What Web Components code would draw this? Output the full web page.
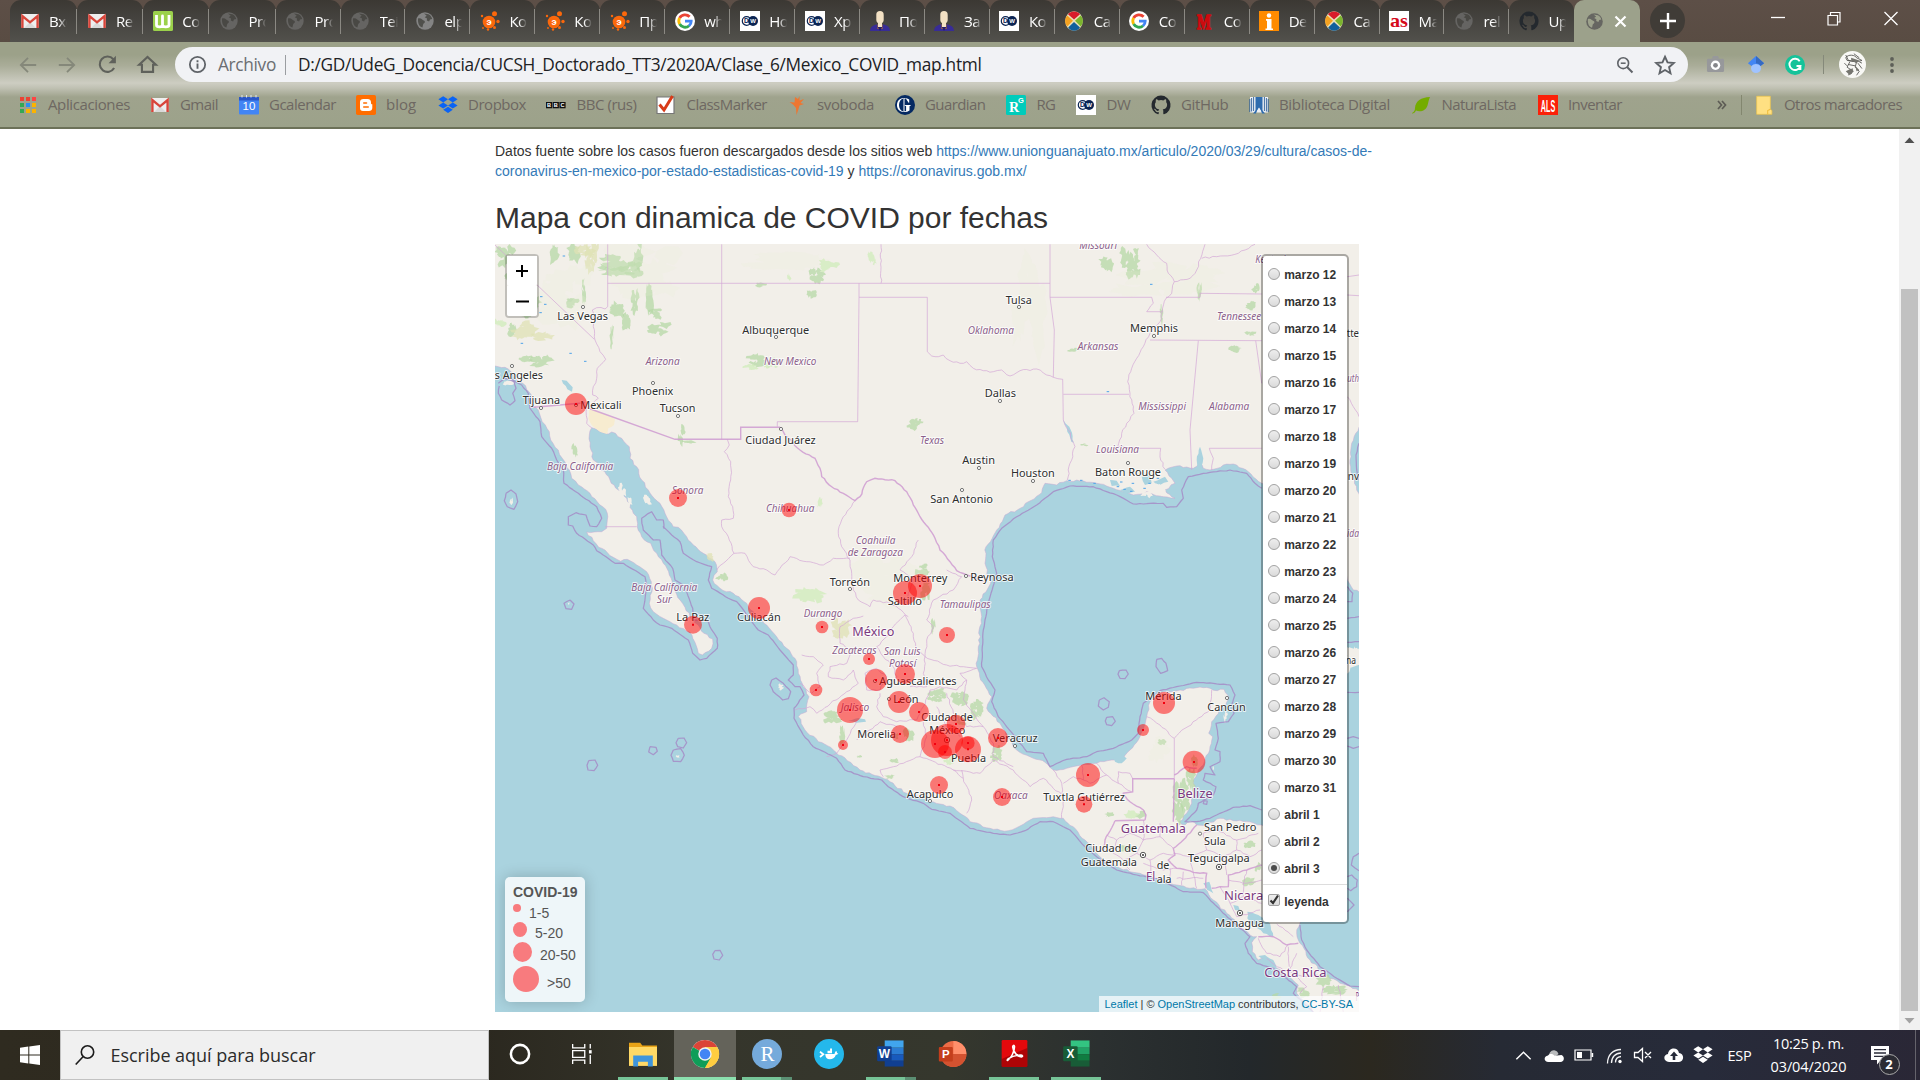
<!DOCTYPE html>
<html lang="es">
<head>
<meta charset="utf-8">
<title>Mexico_COVID_map.html</title>
<style>
html,body{margin:0;height:100%;background:#fff;overflow:hidden}
</style>
</head>
<body>
<desktop-screen></desktop-screen>
<script>
const UI = '"Open Sans","Noto Sans",sans-serif';
const define = (name, html, after) => customElements.define(name, class extends HTMLElement {
  connectedCallback() {
    if (this.shadowRoot) return;
    const root = this.attachShadow({ mode: 'open' });
    root.innerHTML = typeof html === 'function' ? html(this) : html;
    if (after) after(this, root);
  }
});

/* Text run that is tracked to an exact advance width */
define('fit-text', '<style>:host{display:inline-block;white-space:nowrap}span{display:inline-block}</style><span><slot></slot></span>', (el, root) => {
  const want = parseFloat(el.getAttribute('w'));
  if (!want) return;
  const s = root.querySelector('span'), n = el.textContent.length;
  s.style.letterSpacing = ((want - s.getBoundingClientRect().width) / n).toFixed(3) + 'px';
});

const T = (x, y, size, fill, str, extra = '') => `<text x="${x}" y="${y}" font-size="${size}" fill="${fill}" text-anchor="middle" ${extra}>${str}</text>`;
const dropbox = c => `<path fill="${c}" d="M5.2 1.2 10 4.3 5.2 7.4.4 4.3zM14.8 1.2l4.8 3.1-4.8 3.1L10 4.3zM.4 10.5l4.8-3.1 4.8 3.1-4.8 3.1zM14.8 7.4l4.8 3.1-4.8 3.1-4.8-3.1zM5.2 14.8 10 11.7l4.8 3.1-4.8 3.1z"/>`;
const globe = (a, b) => `<circle cx="10" cy="10" r="8.7" fill="${a}"/><path fill="${b}" d="M3 7.500c1.500-.6 3-.2 4.200.9 1.200 1.200 2.600.6 2.700 2.300.1 1.500-1.900 1.500-1.900 3.200l-.6 2.600C4.500 15.500 2.700 13 3 7.500zM9 2.500l4.500.8c2 1 3.200 2.600 3.700 4.700l-2.200.4-.9 2-2.300-.8.2-2L9.700 6.300l2-1.600z"/>`;
const dw = `<path fill="#fff" d="M0 0h20v20H0z"/><circle cx="6.600" cy="10" r="4.300" fill="none" stroke="#0b2453" stroke-width="1.200"/><circle cx="13" cy="10" r="5" fill="#0b2453"/>${T(6.4, 12.4, 6.5, '#0b2453', 'D', 'font-weight="700"')}${T(13.2, 12.2, 6, '#fff', 'W', 'font-weight="700"')}`;
const gh = c => `<path fill="${c}" d="M10 .6a9.600 9.600 0 0 0-3 18.700c.5.1.7-.2.700-.5v-1.700c-2.700.6-3.300-1.300-3.300-1.300-.4-1.100-1.100-1.400-1.100-1.400-.9-.6.1-.6.1-.6 1 .1 1.500 1 1.500 1 .9 1.500 2.300 1.100 2.800.8.100-.6.300-1.100.6-1.300-2.100-.2-4.400-1.100-4.400-4.800 0-1 .4-1.900 1-2.600-.1-.2-.4-1.200.1-2.500 0 0 .8-.3 2.600 1a9.200 9.200 0 0 1 4.800 0c1.800-1.300 2.600-1 2.600-1 .5 1.300.2 2.300.1 2.500.6.700 1 1.600 1 2.600 0 3.700-2.300 4.600-4.400 4.800.3.300.6.900.6 1.800v2.700c0 .3.200.6.700.5A9.600 9.600 0 0 0 10 .6z"/>`;
const winapp = (a, b, c, d, ch) => `<path fill="${a}" d="M6 1h13v5H6z"/><path fill="${b}" d="M6 6h13v4.500H6z"/><path fill="${c}" d="M6 10.500h13V15H6z"/><path fill="${d}" d="M6 15h13v4H6z"/><rect x=".8" y="5" width="10" height="10.400" rx=".8" fill="${d}"/>${T(5.8, 13, 8.2, '#fff', ch, 'font-weight="700"')}`;

const ICONS = {
  gmail: '<rect x="1.200" y="3" width="17.600" height="14" rx="1.200" fill="#eee"/><path fill="#d9d9d9" d="M4 17l6-6 6 6z"/><path fill="none" stroke="#d8453a" stroke-width="2.400" d="M2.400 17V5l7.600 6.300L17.600 5v12"/>',
  webtoon: '<rect width="20" height="20" rx="1.500" fill="#9bd14b"/><path fill="none" stroke="#fff" stroke-width="2.800" stroke-linejoin="round" d="M3.500 4v10c0 2.500 6 2.500 6 0V5v9c0 2.500 6.500 2.500 6.500 0V4"/>',
  globe: globe('#656462', '#494844'),
  globelit: globe('#848484', '#50504c'),
  globetab: globe('#666661', '#9da28c'),
  ekho: '<circle cx="9" cy="11" r="6.300" fill="#fb680c"/><circle cx="14.500" cy="2.800" r="2.500" fill="#fb680c"/><circle cx="18" cy="10.500" r="1.700" fill="#fb680c"/><circle cx="2" cy="5" r="1.200" fill="#fb680c"/><circle cx="14.500" cy="16.500" r="1.500" fill="#fb680c"/><circle cx="8" cy="18.500" r="1.200" fill="#fb680c"/><circle cx="3" cy="17" r=".9" fill="#fb680c"/>' + T(9, 14.4, 9.5, '#fff', 'э', 'font-weight="700"'),
  google: '<circle cx="10" cy="10" r="10" fill="#fff"/><path fill="none" stroke="#ea4335" stroke-width="2.800" d="M4.600 7A6.200 6.200 0 0 1 14.600 5.800"/><path fill="none" stroke="#fbbc05" stroke-width="2.800" d="M4.600 7a6.200 6.200 0 0 0 0 6"/><path fill="none" stroke="#34a853" stroke-width="2.800" d="M4.600 13a6.200 6.200 0 0 0 9.500 1.700"/><path fill="none" stroke="#4285f4" stroke-width="2.800" d="M14 14.800c1.500-1.200 2.200-2.500 2.200-4.600H10"/>',
  dw,
  person: '<path fill="#382c96" d="M0 20c.3-3.500 1.500-5 6-6.500h8c4.500 1.500 5.700 3 6 6.500z"/><path fill="#b8742f" d="M7.500 13.500h5V18h-5z"/><path fill="#261d6d" d="M7.500 15.500 10 20l2.500-4.500z"/><path fill="#f3e1c4" d="M8 11h4v5H8z"/><rect x="6.300" y="0" width="7.400" height="12.500" rx="3.700" fill="#f3e1c4"/>',
  drop: '<ellipse cx="10" cy="10" rx="8.800" ry="9.800" fill="#e9e0b9"/><path fill="#d81c2b" d="M10 8.500 4 3.200C7-.5 13-.5 16 3.200z"/><path fill="#105f9d" d="m10 11-5.800 5.500c3 4.300 8.800 4.300 11.800 0z"/><path fill="#f4a221" d="M9 9.800 3.300 4.500c-3 3.500-2.800 7.500 0 11z"/><path fill="#7bb52e" d="m11 9.800 5.700-5.300c3 3.500 2.800 7.500 0 11z"/>',
  medusa: T(10, 17.5, 20, '#ce0a0e', 'M', 'font-weight="900" font-family="Liberation Serif" textLength="14" lengthAdjust="spacingAndGlyphs" stroke="#ce0a0e" stroke-width="1.400"'),
  info: '<path fill="#ff8b00" d="M0 0h20v20H0z"/><circle cx="10" cy="4.500" r="2.200" fill="#fff"/><path fill="#fff" d="M7 8h5.500v9.500H14V19H6.500v-1.500H8V9.800H7z"/>',
  as: '<path fill="#fff" d="M0 0h20v20H0z"/>' + T(10, 15.5, 19, '#d5091b', 'as', 'font-weight="700" font-family="Liberation Serif" textLength="18" lengthAdjust="spacingAndGlyphs"'),
  github: gh('#24292e'),
  apps: [['#ea4335', '#ea4335', '#f44'], ['#34a853', '#2d8ff0', '#fbb300'], ['#34a853', '#fbb300', '#fbb300']].map((r, j) => r.map((c, i) => `<path fill="${c}" d="M${2 + i * 6} ${2 + j * 6}h4v4h-4z"/>`).join('')).join(''),
  calendar: '<path fill="#4285f4" d="M0 2h20v16.500a1 1 0 0 1-1 1H1a1 1 0 0 1-1-1z"/><path fill="#2a56c6" d="M0 2h20v3.500H0z"/><path stroke="#dfe6f4" stroke-width="1" d="M3 0v2.500M7.500 0v2.500M12 0v2.500M17 0v2.500"/>' + T(10, 15.3, 11.5, '#fff', '10'),
  blogger: '<rect width="20" height="20" rx="1.800" fill="#ff6d00"/><path fill="#fff" fill-rule="evenodd" d="M7.500 4h4c2.500 0 3.500 1.600 3.500 3.400 0 1.500.3 1.700 1.300 1.900v3.700c0 2-1.500 3-3.300 3H7c-2 0-3-1.200-3-3V7c0-1.800 1.300-3 3.500-3zm.3 3.200c-1.100 0-1.100 1.600 0 1.600h2.700c1.100 0 1.100-1.600 0-1.600zm0 4c-1.100 0-1.100 1.600 0 1.600h4.400c1.100 0 1.100-1.600 0-1.600z"/>',
  dropbox: dropbox('#0a63f5'),
  bbc: [0, 6.7, 13.4].map(x => `<path fill="#111" d="M${x} 7h6.200v6.300H${x}z"/>` + T(x + 3.1, 12.2, 5.6, '#fff', x > 13 ? 'C' : 'B', 'font-weight="700"')).join(''),
  classmarker: '<path fill="#fff" stroke="#777" stroke-width="1.200" d="M1 2h17v16.500H1z"/><path fill="none" stroke="#d83b18" stroke-width="3" d="M3.500 9.500 8 15l8.500-14"/>',
  svoboda: '<path fill="#ee7631" d="m8 2 3 2 1.500-3v4.500L17 4l-3.500 4 3.500 1-4.500 1.500L11.500 14 9.500 20 9 13 6 9.500 2.500 7l5 .5z"/>',
  guardian: '<circle cx="10" cy="10" r="10" fill="#052962"/><path fill="#fff" d="M8.500 3.500c-6 .8-6 12.200 0 13V17C-.2 16.500-.2 3.500 8.500 3z"/><path fill="#fff" d="M9.500 3c2 .1 3.500.6 4.700 1.500v3.300h-.6L11 3.700l-1.500-.2zM9.500 17V3h-1v14zM9.800 10h6v.6l-1.300.6v4.200A9 9 0 0 1 9.500 17v-.6l1.600-.6v-4.600L9.800 10.600z"/>',
  rg: '<rect width="20" height="20" rx="1.500" fill="#00ccbb"/>' + T(8, 17, 14, '#fff', 'R', 'font-family="Liberation Serif" font-weight="700"') + T(15, 7.6, 7.5, '#fff', 'G', 'font-weight="700"'),
  biblio: '<path fill="#eef1f6" d="M1 2h18v15.500H1z"/><path fill="#2f6cae" d="M6.500 2h7v15.500L10 12.500l-3.500 5z"/><path fill="#2f6cae" d="m11 12.500 5 6h-3zM9 12.500l-5 6h3z"/><path fill="none" stroke="#2b5d98" stroke-width=".9" d="M.8 4v13M2.600 3v13.500M4.600 2v14M15.400 2v14M17.400 3v13.500M19.200 4v13"/>',
  leaf: '<path fill="#74ac00" d="M1 18c2-1 3-2.500 3-5C4.500 6 10 2.500 19 2c-1.500 3-1.500 5.500-2.500 8.500C15 15.500 9.500 17.500 5 15.500c-1 2-2 3-4 3z"/>',
  als: '<path fill="#fb2109" d="M0 0h20v20H0z"/>' + T(10, 7.3, 7.2, '#fff', 'ALS', 'font-weight="700" transform="scale(1 2.280)"'),
  folder: '<path fill="#ffe082" stroke="#ecc44e" stroke-width=".7" d="M3.500 1.200h13v12.500l1.500 1v3.700H3.500z"/><path fill="none" stroke="#f0bd3c" stroke-width="1" d="M14 18.300v-3.500l2.500-1.300"/>',
  back: '<path fill="none" stroke="#85887a" stroke-width="1.800" d="M18.200 10H3.200M10 2.800 2.800 10l7.200 7.200"/>',
  forward: '<path fill="none" stroke="#85887a" stroke-width="1.800" d="M1.800 10h15M10 2.800l7.200 7.200-7.200 7.200"/>',
  reload: '<path fill="none" stroke="#5f615b" stroke-width="2" d="M16.300 13.300A7.300 7.300 0 1 1 15.500 5"/><path fill="#5f615b" d="M18 1.700v7h-7z"/>',
  home: '<path fill="none" stroke="#5f615b" stroke-width="2" d="m2 10.200 8-7.400 8 7.400h-2.700V17H4.700v-6.800z"/>',
  about: '<circle cx="10" cy="10" r="7.300" fill="none" stroke="#5f6368" stroke-width="1.700"/><path stroke="#5f6368" stroke-width="1.800" d="M10 9v5M10 6v1.800"/>',
  zoom: '<circle cx="8" cy="8" r="6" fill="none" stroke="#5f6368" stroke-width="1.800"/><path stroke="#5f6368" stroke-width="1.700" d="M5.300 8h5.400"/><path stroke="#5f6368" stroke-width="2.200" d="m12.300 12.300 6 6"/>',
  star: '<path fill="none" stroke="#5f6368" stroke-width="1.700" d="m10 2.500 2.300 5.200 5.700.5-4.300 3.800 1.300 5.600-5-3-5 3 1.300-5.600L2 8.200l5.700-.5z"/>',
  camera: '<rect x="1" y="4" width="18" height="14" rx="1.500" fill="#97989b"/><path fill="#97989b" d="m6 4 1.500-3h5L14 4z"/><circle cx="10" cy="10.800" r="5" fill="#fff"/><circle cx="10" cy="10.800" r="2.500" fill="#85868a"/>',
  scholar: '<circle cx="10" cy="13.500" r="5.500" fill="#a0c3ff"/><path fill="#4285f4" d="M10 0 1 8l4 3c2-3 8-3 10 0l4-3z"/><path fill="#356ac3" d="m10 0 9 8-4 3c-1-2-3-3-5-3z"/>',
  grammarly: '<circle cx="10" cy="10" r="10" fill="#15c39a"/><path fill="none" stroke="#fff" stroke-width="1.900" d="M14.700 6.300A5.600 5.600 0 1 0 15.400 11H11.500M15.400 10.500V15"/>',
  avatar: '<circle cx="10" cy="10" r="10" fill="#f8f8f5"/><path fill="none" stroke="#4a4a47" stroke-width=".6" d="M5 5c2-3 7-2 8 0l4 2-4 1-7-1zM5 3l2 4 6 1M13 8l-1 4 3 3-2 3M8 8l-2 4 3 2-2 4M14 9l3 4M4 9l2 2M10 13l-1 4M11 2l4 3M7 10l5 1M15 8l2 1"/><path fill="#75756f" d="m9 5 6 2-2 2-4-2zM5 15l4-2 2 2-3 3zM12 11l3 3-2 1z"/>',
  dots: '<g fill="#5d5f58"><circle cx="10" cy="4" r="1.900"/><circle cx="10" cy="10" r="1.900"/><circle cx="10" cy="16" r="1.900"/></g>',
  winstart: '<path fill="#fff" d="m0 2.800 8.300-1.200v7.900H0zM9.300 1.500 20 0v9.500H9.300zM0 10.500h8.300v7.900L0 17.200zM9.300 10.500H20V20L9.300 18.500z"/>',
  lens: '<circle cx="12.500" cy="7" r="6.200" fill="none" stroke="#1b1b1b" stroke-width="1.600"/><path stroke="#1b1b1b" stroke-width="1.600" d="m8.200 11.500-7.500 8"/>',
  cortana: '<circle cx="10" cy="10" r="8.300" fill="none" stroke="#fff" stroke-width="2.300"/>',
  taskview: '<path fill="none" stroke="#fff" stroke-width="1.200" d="M1.500 1v3.500h11V1M1.500 19v-3.500h11V19M1.500 7h11v6h-11zM17.500 1v4M17.500 11v8"/><path fill="#fff" d="M16.300 6.500h2.500V9.500h-2.500z"/>',
  explorer: '<path fill="#e8a317" d="M0 2h8l1.500 2H20v14H0z"/><path fill="#ffd966" d="M0 5h20v13.500H0z"/><path fill="#3f95dc" d="M3 19v-8h14v8h-3.500v-3.500h-7V19z"/>',
  chrome: '<circle cx="10" cy="10" r="10" fill="#fff"/><path fill="#db4437" d="M10 10 1.300 5A10 10 0 0 1 18.700 5z"/><path fill="#0f9d58" d="M10 10v10A10 10 0 0 1 1.300 5z"/><path fill="#ffcd40" d="M10 10V5h8.700A10 10 0 0 1 10 20z"/><path fill="#0f9d58" d="m10 20 4.300-7.500H6z"/><path fill="#ffcd40" d="m10 20 4.300-7.500V10L19 5.500A10 10 0 0 1 10 20z"/><circle cx="10" cy="10" r="4.800" fill="#f1f1f1"/><circle cx="10" cy="10" r="3.800" fill="#4285f4"/>',
  rstudio: '<circle cx="10" cy="10" r="10" fill="#75aadb"/>' + T(10.3, 14.7, 14, '#fff', 'R', 'font-family="Liberation Serif"'),
  ship: '<circle cx="10" cy="10" r="10" fill="#24b8eb"/><path fill="none" stroke="#fff" stroke-width="1.200" d="m4 8.500 2.200 1.700L4 12"/><path fill="#fff" d="M7.500 10h6.200c.2-1 .4-1.600 1.100-2 .5.500.6 1 .5 1.500h.9c-.4.900-.9 1-1.600 1-.8 2.300-2.300 3-4 3-1.900 0-3.100-1.200-3.100-3.500zM9 7.800h3v1.700H9zM10.700 6.400h1.300v1.400h-1.300z"/>',
  word: winapp('#41a5ee', '#2b7cd3', '#185abd', '#103f91', 'W'),
  ppt: '<circle cx="11" cy="10" r="9.300" fill="#ed6c47"/><path fill="#ff8f6b" d="M11 .7a9.300 9.300 0 0 1 9.300 9.300H11z"/><path fill="#d35230" d="M1.700 10h18.600a9.300 9.300 0 0 1-18.600 0z"/><rect x=".6" y="5" width="10" height="10.400" rx=".8" fill="#c43e1c"/>' + T(5.6, 13, 8.2, '#fff', 'P', 'font-weight="700"'),
  acrobat: '<rect x=".5" y="0" width="19" height="20" rx="1" fill="#e4090c"/><path fill="#700" opacity=".5" d="m.5 14 19-8v14H.5z"/><path fill="none" stroke="#fff" stroke-width="1.200" d="M5 15c2.500-1.500 5-6.500 5-10 0-1.500-1.500-1.200-1.300.3C9 8.500 12 12.500 15 12.500c1.500-.2 1-1.300-.5-1.300-3 0-6.500 1-9 2.600-1.200.8-1 1.600-.5 1.200z"/>',
  excel: winapp('#33c481', '#21a366', '#107c41', '#185c37', 'X'),
  caret: '<path fill="none" stroke="#fff" stroke-width="1.500" d="M2.500 14 10 6.500 17.500 14"/>',
  cloud: '<path fill="#b9bbbd" d="M5 12c-.5-4 2.500-7.500 6-6.500 2 .4 3 2 3.500 3.500L8 14z"/><path fill="#fff" d="M4.500 17C-.5 17-.5 11 4 10.500c2-2.300 5-1.800 6.500.3L17.500 10c3.500 1.500 3 7-1 7z"/>',
  battery: '<path fill="none" stroke="#fff" stroke-width="1.200" d="M1 5h16v10H1z"/><path fill="#fff" d="M3 7h5v6H3zM17.600 8h1.600v4h-1.600z"/>',
  wifi: '<circle cx="16" cy="16.500" r="1.700" fill="#fff"/><path fill="none" stroke="#fff" stroke-width="1.300" d="M11.500 17.500c0-3.500 2.300-5.700 5.500-6M7.500 18c0-6 4-10 9.500-10M3.500 18.500C3.500 10 9 4.500 17 4.500" opacity=".95"/>',
  mute: '<path fill="none" stroke="#fff" stroke-width="1.300" d="M1.500 7.500H5l4.500-4v13L5 12.500H1.500zM12 7l6 6M18 7l-6 6"/>',
  upload: '<path fill="#fff" fill-rule="evenodd" d="M5 17c-6-.5-6-7.500-1-8C5 2 14 2 15 8c5.500.5 5.500 8.500 0 9zM10 6.500 6 11h2.700v4h2.600v-4H14z"/>',
  dropwhite: dropbox('#fff'),
  notes: '<path fill="#fff" d="M1 1h18v14h-8l-4 4.500V15H1z"/><path stroke="#2a2b38" stroke-width="1.300" d="M4 4.700h12M4 8h12M4 11.300h12"/>'
};
define('app-icon', el => {
  const s = el.getAttribute('size') || 20;
  return `<style>:host{display:block;flex:none;width:${s}px;height:${s}px}svg{display:block;font-family:"Liberation Sans",sans-serif;overflow:visible}</style><svg width="${s}" height="${s}" viewBox="0 0 20 20">${ICONS[el.getAttribute('name')] || ''}</svg>`;
});
const icon = (n, s = 20, st = '') => `<app-icon name="${n}" size="${s}" style="${st}"></app-icon>`;

/* ---- browser chrome ---- */
const TABS = [['gmail', 'Вхо'], ['gmail', 'Re:'], ['webtoon', 'Cor'], ['globe', 'Pro'], ['globe', 'Pro'], ['globe', 'Tei'], ['globelit', 'elpa'], ['ekho', 'Ко'], ['ekho', 'Ко'], ['ekho', 'Пр'], ['google', 'wh'], ['dw', 'Но'], ['dw', 'Хр'], ['person', 'По'], ['person', 'За'], ['dw', 'Ко'], ['drop', 'Ca'], ['google', 'Co'], ['medusa', 'Co'], ['info', 'De'], ['drop', 'Ca'], ['as', 'Ma'], ['globe', 'rel'], ['github', 'Up']];
define('browser-tab', `<style>
:host{display:flex;align-items:center;box-sizing:border-box;height:42px;padding-left:9.500px;border-radius:11px 11px 0 0;background:linear-gradient(#3b3833,#45433f 45%,#52514c);flex:none}
.t{font:15px ${UI};color:#fff;margin-left:9.500px;width:18px;overflow:hidden;white-space:nowrap;letter-spacing:-.5px;-webkit-mask-image:linear-gradient(90deg,#000 55%,transparent)}
i{width:1px;height:25px;background:#8b8983;margin-left:auto}
:host([last]) i{visibility:hidden}
</style><slot name="icon"></slot><div class="t"><slot></slot></div><i></i>`);
define('tab-strip', `<style>
:host{display:flex;height:42px;background:linear-gradient(#5d4f47,#594c43);padding-left:10px;overflow:hidden}
.active{width:66px;height:42px;background:#9ca18b;border-radius:10px 10px 0 0;display:flex;align-items:center;box-sizing:border-box;padding-left:11px;gap:10px;flex:none}
.plus{width:35px;height:35px;border-radius:50%;background:#403c37;margin:3px 0 0 10px;display:grid;place-items:center}
.win{display:flex;margin:8px 22px 0 auto;gap:42.700px}
svg{display:block}
</style>
${TABS.map(([n, t], i) => `<browser-tab ${i === 23 ? 'last' : ''} style="width:${i === 0 ? 67 : i < 4 ? 66.2 : 64.95}px">${icon(n, 20).replace('<app-icon', '<app-icon slot="icon"')}${t}</browser-tab>`).join('')}
<div class="active">${icon('globetab', 19)}<svg width="13" height="13"><path d="M1.500 1.500l10 10M11.500 1.500l-10 10" stroke="#fff" stroke-width="2.200"/></svg></div>
<div class="plus"><svg width="16" height="16"><path d="M8 0v16M0 8h16" stroke="#fff" stroke-width="2.400"/></svg></div>
<div class="win"><svg width="14" height="20"><path d="M0 9.500h14" stroke="#fff" stroke-width="1.300"/></svg><svg width="14" height="20"><path d="M1 7.500h9.500V17H1zM3.500 7V4.500H13V14h-2.500" fill="none" stroke="#fff" stroke-width="1.200"/></svg><svg width="14" height="20"><path d="M.5 4l13 13M13.500 4l-13 13" stroke="#fff" stroke-width="1.300"/></svg></div>`);
define('omni-bar', `<style>
:host{display:flex;align-items:center;height:35px;padding:5px 18px 2px 18px;font:17.300px ${UI}}
.box{display:flex;align-items:center;height:35px;border-radius:18px;background:#f1f2f5;width:1515px;box-sizing:border-box;margin-left:17px;padding:0 12px 0 12px;color:#202124}
.p{color:#6b6e72;margin-left:10px}.bar{width:1px;height:20px;background:#9a9da1;margin:0 12px 0 9px}
.sep{width:1px;height:19px;background:#85897a;margin:0 15px 0 18px}
</style>
${icon('back', 20)}${icon('forward', 20, 'margin-left:19px')}${icon('reload', 21, 'margin-left:20px')}${icon('home', 21, 'margin-left:19px')}
<div class="box">${icon('about', 21)}<fit-text class="p" w="58">Archivo</fit-text><span class="bar"></span><fit-text w="683.500">D:/GD/UdeG_Docencia/CUCSH_Doctorado_TT3/2020A/Clase_6/Mexico_COVID_map.html</fit-text>${icon('zoom', 18, 'margin-left:auto')}${icon('star', 22, 'margin-left:20px')}</div>
${icon('camera', 19, 'margin-left:18px')}${icon('scholar', 18, 'margin-left:22px')}${icon('grammarly', 20, 'margin-left:20px')}<span class="sep"></span>${icon('avatar', 27)}${icon('dots', 20, 'margin-left:16px')}`);
/* icon, label, label width, x of the icon's left edge */
const MARKS = [['apps', 'Aplicaciones', 82, 18], ['gmail', 'Gmail', 38, 150], ['calendar', 'Gcalendar', 67, 239], ['blogger', 'blog', 30, 356], ['dropbox', 'Dropbox', 58, 438], ['bbc', 'BBC (rus)', 60, 546.500], ['classmarker', 'ClassMarker', 80.5, 656.500], ['svoboda', 'svoboda', 57, 787], ['guardian', 'Guardian', 60.5, 895], ['rg', 'RG', 18.5, 1006.500], ['dw', 'DW', 24, 1076.500], ['github', 'GitHub', 47.5, 1151], ['biblio', 'Biblioteca Digital', 111, 1249], ['leaf', 'NaturaLista', 74.500, 1411.500], ['als', 'Inventar', 54, 1538]];
define('bookmark-bar', `<style>
:host{display:flex;align-items:center;height:42px;padding:0 18px;font:15px ${UI};color:#6e6862}
div{display:flex;align-items:center;gap:10px;flex:none}fit-text{margin-top:-2px}
.more{margin-left:auto;gap:17px}.line{width:1px;height:20px;background:#83876f}
</style>${MARKS.map((m, i) => `<div style="margin-left:${i ? (m[3] - MARKS[i - 1][3] - 30 - MARKS[i - 1][2]).toFixed(1) : 0}px">${icon(m[0])}<fit-text w="${m[2]}">${m[1]}</fit-text></div>`).join('')}
<div class="more"><svg width="10" height="10"><path d="M1 1l3.500 4L1 9M5 1l3.500 4L5 9" fill="none" stroke="#5d5c55" stroke-width="1.700"/></svg><span class="line" style="margin-left:-3px"></span><div style="margin-left:-6px">${icon('folder', 21)}<fit-text w="118">Otros marcadores</fit-text></div></div>`);
define('browser-head', `<style>
:host{display:block;height:129px;box-sizing:border-box;border-bottom:2px solid #6c7158;background:linear-gradient(#9ca189 42px,#9ca189 55px,#aaad99 66px,#cdcdc2 83px,#c0c1b3 88px,#9fa38d 97px,#9ca28a 127px)}
</style><tab-strip></tab-strip><omni-bar></omni-bar><bookmark-bar></bookmark-bar>`);

/* ---- map geometry: each sheet has its own origin, three units to a pixel ---- */
const SHEET = { A: [490, 130], B: [930, 130], C: [490, 520], D: [930, 520], E: [780, 540] };
let seed = 7;
const rnd = () => (seed = (seed * 16807) % 2147483647) / 2147483647;
const pts = str => {
  const out = []; let o = SHEET.A, pend = null;
  for (const t of str.trim().split(/\s+/)) {
    if (SHEET[t]) { o = SHEET[t]; continue; }
    if (pend === null) pend = +t; else { out.push([o[0] + pend / 3, o[1] + t / 3]); pend = null; }
  }
  return out;
};
const rough = (p, amp) => {
  const out = [p[0]];
  for (let i = 1; i < p.length; i++) {
    const [a, b] = p[i - 1], [c, d] = p[i], L = Math.hypot(c - a, d - b), n = Math.min(12, Math.floor(L / 3.2));
    for (let k = 1; k < n; k++) { const j = (rnd() - .5) * 2 * amp; out.push([a + (c - a) * k / n - (d - b) / L * j, b + (d - b) * k / n + (c - a) / L * j]); }
    out.push([c, d]);
  }
  return out;
};
const toD = p => 'M' + p.map(q => q[0].toFixed(1) + ' ' + q[1].toFixed(1)).join('L');
const line = (str, amp = .8) => str.split('|').map(s => toD(amp ? rough(pts(s), amp) : pts(s))).join('');

const LAND = line(`A 0 325 0 706 15 708 45 712 62 724 78 748 98 760 124 795 128 830 145 840 152 862 166 885 178 905 182 930 205 960 217 985 238 1020 245 1045 265 1065 300 1090 338 1130 352 1150
C 352 0 350 25 335 35 290 36 310 62 326 82 345 90 370 112 392 124 412 118 440 135 470 155 484 185 486 215 478 250 490 275 520 295 560 315 600 337 614 365 625 400 637 405 665 385 668 357 642 340 625 315 600 290 585 262 570 240 550 205 538 165 520 130 500 100 482 70 455 50 442 20
A 440 1160 430 1150 410 1105 385 1080 360 1050 330 1010 310 990 300 950 298 915 305 893 330 905 355 912 365 906 395 925 418 950 420 985 440 1010 455 1050 475 1080 510 1120 525 1150 550 1190
C 565 22 590 50 610 75 640 100 675 125 682 155 668 180 690 205 730 220 770 250 800 290 830 315 860 350 890 385 920 425 925 460 940 500 957 530 950 575 925 590 945 630 985 665 1030 690 1072 722 1110 750 1165 768 1200 785 1250 820 1320 845 1380 858
D 90 880 120 905 180 925 235 932 270 918 310 895 370 890 400 895 430 920 465 960 500 1000 530 1025 570 1045 630 1060 680 1075 720 1090 780 1105 825 1106 850 1140 890 1180 925 1215 960 1245 980 1250 965 1268 967 1295 985 1320 1010 1315 1040 1345 1080 1372 1105 1395 1100 1420 1130 1450 1160 1490 1305 1490 1305 1418 1287 1412 1230 1390 1180 1362 1140 1320 1110 1270 1100 1240 1110 1210 1130 1100 1130 940 995 915 960 905 900 898 860 897 830 915 800 915 782 903 765 915 748 905 770 880 785 850 795 810 790 780 805 750 820 735 840 680 848 650 836 640 845 605 868 570 885 560 897 535 882 508 862 512 840 505 800 503 750 510 700 515 660 545 650 590 640 630 625 660 600 690 580 715 545 720 500 730 455 735 410 745 370 750 345 727 300 710 260 690 240 660 210 610 170 565 185 530 152 480 140 440 145 380 153 300 150 240 182 190 165 130 168 80 200 30
B 208 1192 225 1155 262 1140 295 1115 335 1088 345 1060 380 1065 410 1052 450 1053 500 1060 540 1072 590 1088 610 1095 650 1085 700 1100 735 1105 705 1080 735 1060 725 1045 705 1020 740 1008 790 1015 808 1000 820 1015 850 1018 880 1005 920 1005 955 1025 995 1060 1060 1110 1120 1090
D 1200 50 1252 180 1270 210 1300 222 B 1300 1120 1280 1080 1262 1010 1265 940 1287 892 1305 860 1305 325`, 1.1) + 'Z';

const SEA = line(`A 60 745 95 765 115 790 120 835 150 875 155 920 185 955 200 990 220 1020 222 1060 265 1090 320 1130 335 1165 320 1190 300 1188 288 1155 258 1148 235 1160 235 1185 C 248 18 260 40 310 75 320 92 375 130 400 130 465 170 470 200 460 265 490 300 510 315 545 325 595 360 608 400 630 420 650 415 682 385 682 355 660 320 655 305 610 300 608 265 585 200 555 180 548 145 515 105 510 60 490 60 460 30 455 0 A 455 1165 485 1145 500 1170 520 1170 522 1195 C 520 20 545 45 570 65 580 100 620 125 665 140 655 180 665 205 715 235 740 245 775 290 805 330 835 345 870 390 910 435 910 465 895 480 915 500 930 500 942 525 912 565 912 595 940 645 970 680 1040 715 1065 750 1120 770 1175 780 1195 800 1240 830 1300 850 1325 868 1380 880
D 120 925 190 940 240 945 285 932 330 905 370 905 420 930 455 970 500 1010 560 1050 620 1065 690 1078 760 1115 820 1118 880 1180 960 1250 945 1270 955 1300 980 1330 1030 1345 1100 1400 1090 1420 1150 1476
|D 1287 1400 1260 1398 1220 1375 1170 1340 1130 1290 1115 1260 1110 1215
|D 995 870 960 857 910 862 870 880 840 895 800 905 765 905 800 870 805 850 850 825 858 800 820 780 825 760 855 765 840 740 870 725 870 695 855 690 865 655 858 610 895 605 912 580 905 555 915 525 900 495 850 490 800 487 740 500 690 512 640 550 630 590 625 640 605 660 550 685 500 695 470 710 410 718 360 740 340 700 290 695 255 650 205 590 185 545 195 510 175 480 155 440 160 330 175 250 200 160 187 110 190 60 215 25 B 215 1195 260 1160 320 1125 370 1085 420 1068 490 1070 560 1095 610 1122 700 1120 710 1132 740 1130 760 1105 755 1080 775 1040 820 1030 900 1020 950 1030 975 1060 995 1075
|A 25 760 45 745 72 755 78 775 68 790 75 812 60 825 35 810 25 790 28 768
|C 240 240 222 250 228 266 245 268 252 252 240 240|C 845 480 858 474 880 490 902 515 895 536 878 540 850 515 840 495 845 480
|C 480 680 498 682 502 694 490 704 476 696 480 680|C 296 722 315 720 323 736 312 752 294 750 291 736 296 722|C 565 655 582 654 590 668 580 684 563 680 558 668 565 655|C 550 690 572 686 583 706 572 725 550 724 543 706 550 690|C 675 1292 690 1291 698 1306 688 1320 672 1317 668 1303 675 1292
|D 568 452 588 450 595 462 585 476 570 475 564 463 568 452|D 680 418 695 415 708 430 713 452 692 460 678 440 680 418|D 508 540 522 533 538 545 535 562 520 570 505 558 508 540|D 530 592 548 590 556 604 545 617 530 614 526 603 530 592
|A 48 1090 63 1080 78 1092 83 1115 72 1138 52 1130 43 1112 48 1090|D 822 842 832 843 830 853 820 851 822 842
|B 1287 940 1278 975 1280 1020 1287 1050|D 1252 200 1268 220 1266 245 1252 245|D 1252 295 1287 290|D 1252 367 1287 365|D 1252 517 1287 517|D 1252 655 1270 650 1287 655|D 1252 678 1270 685 1287 680|D 1287 1000 1270 1010 1264 1035 1287 1052|D 1252 1070 1265 1065 1282 1080 1280 1100 1262 1112 1252 1105|D 1252 1135 1272 1155 1252 1175`, .35);
const NATION = line(`A 118 832 150 830 285 818|A 290 833 310 840 555 928 752 928 752 892 870 892|D 733 776 608 776 608 816 578 820|D 733 776 730 905|D 645 900 555 902`, 0)
  + line(`A 870 892 885 915 930 960 975 985 990 1015 995 1040 1025 1070 1060 1090 1095 1112 1110 1100 1130 1055 1155 1045 1215 1052 1250 1085 1270 1125 1290 1160 1320 1200 C 1335 55 1350 90 1380 125 D 80 152 110 165 160 185
|D 578 820 600 845 640 870 648 885 645 900|D 555 902 525 960 520 990|D 800 915 760 960 730 985 735 1005 715 1020 740 1045 800 1058 830 1060 828 1105|D 845 1105 870 1100 895 1100 895 1065 950 1050 995 1035|D 985 1250 1030 1250 1070 1275 1105 1270|D 733 765 770 740 800 745`, .6);
const STATE = line(`A 353 343 353 530|A 353 460 1380 460|B 60 460 360 460|A 695 343 695 928|A 1107 460 1107 502 1312 502 1312 665|A 1107 502 1103 875 862 875 862 890|A 15 345 313 628|B 360 343 360 502 373 600 370 742|B 360 502 665 502|B 650 545 697 545|B 708 502 810 502 810 490 995 492|B 660 630 995 632|B 805 632 780 900 785 1020|B 977 632 995 760|B 400 793 597 793|B 398 748 400 870|B 630 955 692 955|B 838 955 995 955|C 345 20 440 20|B 1252 440 1287 435|B 1252 495 1287 497|D 733 776 733 655`, 0)
  + line(`A 353 530 345 537 320 533 307 540 312 560 310 590 315 630 330 665 347 688 322 715 320 745 310 770 308 795 325 805 290 833 290 880 305 893|A 1173 343 1173 460
|A 1312 665 1325 678 1345 680 1360 675 1380 692 B 90 700 110 695 130 715 160 722 190 725 215 720 240 738 270 722 320 717 350 735 370 742 398 748
|A 712 928 718 945 703 965 722 995 722 1050 715 1100 728 1130 730 1165 695 1170 C 695 20 715 50 732 100 700 130 680 150|C 732 100 765 100 790 140 830 150 855 165 870 145 900 110 950 125 1000 135 1030 115 1080 115
|A 1095 1112 1060 1160 1045 1200 C 1045 40 1055 80 1080 120 1085 160 1090 210 1105 240 1140 260 1150 240 1200 250 1225 265 1255 290
|B 665 502 670 520 650 545|B 650 343 680 375 710 400 715 430 733 455 725 490 708 505 697 545 690 575 660 610 640 650 620 685 605 715 593 755 600 790 612 850 590 880 575 910 563 950 630 955|B 692 955 690 980 705 1018|B 733 455 780 445 800 420 812 385 825 343|B 815 385 860 380 925 370 975 343|B 400 870 415 900 435 950 420 1000 412 1050|B 838 955 850 985 845 1020|B 1252 800 1270 830 1287 860
|E 415 0 395 50 360 90 400 115 385 160 380 190|E 500 90 545 110 520 150 460 180 440 240 460 260 440 300 435 350 500 375 590 385|E 435 350 430 400 440 440 390 440|E 250 228 220 235 180 260 180 310 215 330 200 370 150 380 145 410 190 420 220 390 235 430 200 455|E 375 225 340 260 320 290 290 320 310 350 340 380 350 410 330 440|E 65 345 100 350 130 375 110 400 120 440 95 460 60 430|E 255 400 290 385 320 410 300 450 260 450 255 400|E 300 460 290 500 310 530 350 545 410 540 430 500 450 450 480 440 530 450 560 420 540 400 590 385|E 230 540 200 600 170 640 140 650|E 230 600 300 545 350 560|E 430 545 440 590 420 650 370 670 300 690 310 710|E 420 650 520 690 550 715 575 780 560 820|E 520 690 600 700 640 660 700 690 750 740 790 715 845 765|E 500 460 520 520 560 560 610 560 640 610 640 650 700 680|E 470 500 500 560 540 590|E 560 420 550 480 580 520 610 560|E 45 510 90 500 110 520 200 455|E 375 225 400 280 410 330 435 350|E 550 715 545 690
|D 370 750 395 790 400 860 395 895|D 500 730 530 765 565 790 605 815|D 565 790 565 755 600 760 608 776|D 455 735 460 780 480 790 530 765|D 650 590 690 615 733 655 765 625 840 570 845 510|D 400 790 430 770 460 780
|D 530 945 560 960 600 940 640 960 690 950 730 985|D 560 960 550 1000 580 1020 620 1000 640 960|D 620 1000 660 1020 700 1000 735 1005|D 580 1020 600 1050|D 660 1020 665 1065|D 640 900 640 960|D 690 910 690 950|D 640 1030 700 1050 740 1045|D 720 1045 725 1090|D 760 1055 755 1095|D 790 1058 800 1105|D 740 1075 820 1075|D 730 1000 780 1010 830 990 880 1010 920 990 960 1010 995 990|D 780 1010 790 1058|D 830 990 820 940 860 930|D 880 1010 890 1065|D 860 930 920 960 920 990|D 920 960 985 940|D 870 1100 900 1150 940 1130 995 1150|D 895 1080 940 1090 950 1050|D 940 1130 940 1090 995 1080|D 900 1150 920 1190 990 1170|D 985 1255 1010 1300 1050 1310 1075 1275|D 1075 1280 1078 1340|D 1010 1315 1060 1350 1120 1370 1180 1365|D 1100 1300 1080 1345 1130 1400 1110 1420|D 1180 1400 1170 1476|D 1040 1212 1090 1250|D 1225 1395 1240 1476`, .9);

const blobs = (str, color, op = 1) => str.split('|').map(s => {
  const [sh, x, y, w, h, n = 5] = s.trim().split(/\s+/), o = SHEET[sh]; let d = '';
  for (let i = 0; i < +n; i++) {
    const cx = o[0] + (+x + (rnd() - .5) * w * .75) / 3, cy = o[1] + (+y + (rnd() - .5) * h * .75) / 3, m = 11, q = [];
    for (let k = 0; k < m; k++) { const a = k / m * 6.283, r = .3 + rnd() * .85; q.push([cx + Math.cos(a) * r * w / 3 / (1.4 + n * .22), cy + Math.sin(a) * r * h / 3 / (1.4 + n * .22)]); }
    d += toD(q) + 'Z';
  }
  return `<path d="${d}" fill="${color}" opacity="${op}"/>`;
}).join('');
const GREEN = blobs(`A 240 370 50 60 6|A 380 400 110 50 12|A 420 420 60 40 7|A 450 370 34 90 8|A 190 375 30 50 5|A 380 425 80 24 6|A 480 500 26 90 8|A 495 550 35 30 5|A 508 597 55 34 5|A 240 520 36 30 4|A 280 480 12 60 4|A 380 540 40 50 9|A 410 580 28 60 8|A 435 515 20 60 6|A 365 620 10 60 4|A 100 688 40 26 5|A 155 694 60 30 6|A 45 380 50 50 7|A 70 440 40 40 7|A 120 530 60 60 8|A 70 600 30 40 5|A 797 690 46 34 6|A 980 440 44 46 10|A 965 485 24 30 4|A 810 465 26 12 4|A 257 962 16 30 4|A 1275 883 38 30 8|A 575 915 16 50 6|A 595 935 36 10 5|B 530 408 40 50 6|B 600 400 60 100 18|B 808 480 12 50 5|B 980 475 20 20 4|B 960 530 34 26 5|B 915 657 40 20 7|B 425 660 40 10 6|B 960 612 26 12 4|B 460 945 18 6 3|B 695 560 8 50 5
|C 698 167 30 24 5|E 430 90 46 34 9|E 435 150 26 60 7|E 460 255 12 40 4|E 155 530 56 34 8|E 188 575 16 60 5|E 238 652 12 8 3|E 345 660 24 14 4|E 470 465 60 40 14|E 540 480 50 50 12|E 590 510 46 60 14|E 650 645 40 46 10|E 330 710 26 10 4|E 540 540 36 26 8|E 390 590 34 50 9|E 345 590 24 16 5
|D 755 820 44 100 9|D 745 880 30 70 5|D 782 780 26 60 5|D 800 725 24 34 5|D 697 664 24 18 5|D 632 880 24 24 4|D 960 975 30 24 4|D 985 1045 20 20 2|D 1175 1385 46 36 6|D 1210 1412 70 26 8|D 1125 1420 34 26 5|D 590 985 50 16 5|D 545 880 26 16 3|D 960 1085 50 24 7|D 1040 1430 26 16 3`, '#b5d8a6', .75)
  + blobs(`A 305 380 34 100 10|A 290 365 56 34 7|A 110 600 80 50 8|A 160 620 56 22 5|C 1050 330 60 60 9|C 655 110 26 20 4`, '#dfe1b4', .75)
  + blobs(`A 1015 408 56 32 8|A 1145 384 24 34 8|A 845 700 40 30 8|A 780 712 36 14 5|A 28 580 34 26 5|A 895 438 12 22 4|D 605 882 36 26 4|A 990 1120 14 28 3|C 1375 720 30 26 5|C 960 230 80 50 7`, '#d3ecbf', .85)
  + blobs(`A 225 500 180 200 14|A 900 400 300 60 10|B 700 450 300 90 10|E 300 120 240 160 10|A 480 420 260 150 12|B 300 520 100 300 10|D 690 690 60 60 6`, '#e9eed9', .2);
const WATER = line(`A 215 750 230 752 248 772 246 785 232 778 215 750|C 1075 602 1095 596 1125 598 1128 605 1100 608 1075 602|D 545 700 575 705 590 715 575 730 555 725 545 700|D 952 1175 985 1185 1020 1210 1030 1250 1000 1240 975 1215 952 1195 952 1175|D 985 1308 1010 1325 1040 1345 1030 1320 1005 1305 985 1308|D 910 1155 925 1158 930 1172 915 1170 910 1155|D 820 1090 838 1085 850 1120 832 1110 820 1090|B 400 870 418 890 432 938 424 935 412 905 400 870|B 800 990 810 950 820 985 815 1008 802 1008 800 990|B 635 1040 660 1035 665 1060 645 1065 635 1040|B 670 1055 705 1040 715 1055 690 1065 670 1055|B 540 1050 560 1052 570 1068 545 1068 540 1050|B 570 1080 600 1070 615 1085 590 1092 570 1080`, .8);
const SPARK = 'A 150 500 A 162 523 A 238 670 A 282 694 A 148 548 A 92 640 A 218 378 B 415 1051 B 450 1051 B 490 1060 B 570 1056 B 580 1078 B 600 1084 B 660 463 B 530 785 B 655 1060 B 640 1075 B 680 1045 B 605 1060 B 560 1070';
const ISLES = blobs('A 393 1085 20 40 4|A 415 1110 16 30 2|A 470 1112 22 30 3|A 63 1110 8 24 2|A 50 762 26 14 2|C 563 706 10 10 1|C 871 500 16 16 2|C 236 252 6 6 1|D 886 588 10 24 2|D 1270 420 60 70 6|D 850 745 6 12 2|B 690 1080 40 30 4|B 650 1090 30 20 3', '#f2efe9');

/* label: sheet, x-left, baseline, width in sheet units, text */
const CITY = `A|202|570|152|Las Vegas;A|757|612|201|Albuquerque;A|14|746|145|s Angeles;A|426|794|124|Phoenix;A|509|846|107|Tucson;A|98|823|112|Tijuana;A|271|837|124|Mexicali;A|766|941|211|Ciudad Juárez;B|227|521|78|Tulsa;B|600|606|144|Memphis;B|164|802|94|Dallas;B|97|1002|98|Austin;B|243|1042|131|Houston;B|1|1118|188|San Antonio;B|495|1038|198|Baton Rouge;C|1019|198|121|Torreón;C|1210|187|162|Monterrey;C|1193|256|103|Saltillo;D|121|183|130|Reynosa;C|559|304|99|La Paz;C|741|304|131|Culiacán;E|298|436|232|Aguascalientes;C|1210|550|76|León;C|1102|653|116|Morelia;E|424|543|155|Ciudad de;E|448|583|108|México;E|513|667|105|Puebla;E|638|607|135|Veracruz;E|380|774|140|Acapulco;D|340|842|245|Tuxtla Gutiérrez;D|646|539|109|Mérida;D|832|573|115|Cancún;D|822|934|157|San Pedro;D|822|976|65|Sula;D|466|997|156|Ciudad de;D|452|1038|169|Guatemala;D|774|1026|185|Tegucigalpa;D|680|1047|38|de;D|680|1089|44|ala;D|856|1222|146|Managua;B|1250|622|37|tte;B|1253|1050|34|nv;D|1248|433|30|na`;
const REGION = `A|467|706|102|Arizona;A|822|706|157|New Mexico;A|1290|941|72|Texas;A|171|1019|199|Baja California;A|546|1091|94|Sonora;A|828|1147|145|Chihuahua;B|448|357|113|Missouri;B|113|613|139|Oklahoma;B|443|660|122|Arkansas;B|861|570|133|Tennessee;B|625|839|143|Mississippi;B|837|839|121|Alabama;B|498|970|129|Louisiana;B|976|400|110|Kentucky;B|1252|755|35|uth;C|1097|73|119|Coahuila;C|1073|109|166|de Zaragoza;C|424|212|198|Baja California;C|500|248|46|Sur;C|941|291|116|Durango;C|1027|403|133|Zacatecas;C|1182|405|110|San Luis;C|1197|441|82|Potosí;C|1052|572|86|Jalisco;D|29|263|153|Tamaulipas;D|192|836|101|Oaxaca;D|1251|50|36|ida`;
const COUNTRY = `C|1087|347|126|México;D|572|939|196|Guatemala;D|742|833|106|Belize;D|648|1083|28|El;D|882|1140|188|Nicaragua;D|1003|1370|187|Costa Rica;D|1277|1443|10|P`;
const labels = (str, cls) => `<g class="${cls}">` + str.split(';').map(s => { const [sh, x, y, w, t] = s.split('|'), o = SHEET[sh]; return `<text x="${(o[0] + x / 3).toFixed(1)}" y="${(o[1] + y / 3).toFixed(1)}" textLength="${(w / 3).toFixed(1)}" lengthAdjust="spacingAndGlyphs">${t}</text>`; }).join('') + '</g>';
const DOTS = 'A 279 531 A 858 621 A 66 708 A 489 759 A 564 858 A 153 834 A 258 825 A 873 897 B 267 531 B 672 618 B 210 813 B 147 1014 B 309 1053 B 96 1080 B 594 999 C 1080 207 D 108 168 E 285 423 E 327 477 E 705 618 E 450 783 D 891 534 D 810 941';
const CAPS = 'D 639 1005 D 867 1041 D 930 1179 E 501 600';
const CASES = [['A', 258, 822, 33], ['A', 564, 1104, 27], ['A', 897, 1140, 22], ['C', 807, 264, 33], ['C', 609, 314, 27], ['C', 996, 321, 19], ['C', 1137, 417, 18], ['C', 1158, 480, 33], ['C', 1245, 462, 30], ['C', 978, 510, 19], ['C', 1080, 570, 39], ['C', 1227, 546, 33], ['C', 1287, 576, 30], ['C', 1230, 642, 27], ['C', 1059, 675, 15], ['C', 1347, 795, 27], ['C', 1245, 219, 36], ['C', 1290, 198, 36], ['E', 501, 285, 24], ['E', 501, 600, 48], ['E', 465, 612, 42], ['E', 495, 636, 21], ['E', 528, 552, 28], ['E', 564, 628, 39], ['E', 564, 609, 20], ['E', 654, 594, 30], ['E', 666, 771, 27], ['D', 702, 549, 33], ['D', 639, 630, 18], ['D', 792, 726, 34], ['D', 474, 765, 36], ['D', 462, 853, 25]];

define('map-canvas', `<style>:host{display:block}svg{display:block}
text{font-family:"Noto Sans",sans-serif;paint-order:stroke;stroke:#fff;stroke-opacity:.75;stroke-width:2px;stroke-linejoin:round}
.city{font-size:11.500px;fill:#2e2e2e}.region{font-size:10.800px;font-style:italic;fill:#8c5f8b}.country{font-size:13px;fill:#7b3a80}
</style><svg width="864" height="768" viewBox="495 244 864 768">
<rect x="495" y="244" width="864" height="768" fill="#aad3df"/>
<path d="${LAND}" fill="#f2efe9" stroke="#c7a8d2" stroke-width=".5"/>
<path d="${line('A 298 833 312 838 375 868 372 885 355 895 352 912 330 905 305 885 295 865 298 833', .4)}" fill="#f7ecd0"/>
${GREEN}<path d="${WATER}" fill="#aad3df"/>${ISLES}
${pts(SPARK).map(p => `<path d="M${p[0]} ${p[1]}h2.500" stroke="#4ea2e8" stroke-width="1"/>`).join('')}
<path d="${STATE}" fill="none" stroke="#d3a5d6" stroke-opacity=".68" stroke-width="1"/>
<path d="${NATION}" fill="none" stroke="#cf9bd1" stroke-width="1.400" stroke-opacity=".85"/>
<path d="${SEA}" fill="none" stroke="#a58fc8" stroke-width="1.250" stroke-linejoin="round" opacity=".9"/>
${pts(DOTS).map(p => `<circle cx="${p[0]}" cy="${p[1]}" r="1.600" fill="#fff" stroke="#555" stroke-width=".8"/>`).join('')}
${pts(CAPS).map(p => `<circle cx="${p[0]}" cy="${p[1]}" r="2.700" fill="#fff" stroke="#444" stroke-width=".9"/><circle cx="${p[0]}" cy="${p[1]}" r="1.100" fill="#444"/>`).join('')}
${labels(REGION, 'region')}${labels(COUNTRY, 'country')}${labels(CITY, 'city')}
${CASES.map(([s, x, y, r]) => { const cx = SHEET[s][0] + x / 3, cy = SHEET[s][1] + y / 3; return `<circle cx="${cx}" cy="${cy}" r="${r / 3}" fill="#f00" fill-opacity=".5"/><path d="M${cx - 1} ${cy - 1}h2v2h-2z" fill="#f20010"/>`; }).join('')}
</svg>`);

define('zoom-control', `<style>:host{display:block;width:30px;border:2px solid rgba(0,0,0,.2);background-clip:padding-box;border-radius:4px}
div{height:30px;background:#fff;display:grid;place-items:center;border-radius:0 0 2px 2px}div:first-child{border-bottom:1px solid #ccc;border-radius:2px 2px 0 0}svg{display:block}</style>
<div><svg width="12" height="12"><path d="M6 0v12M0 6h12" stroke="#000" stroke-width="2"/></svg></div><div><svg width="13" height="3"><path d="M0 1.500h13" stroke="#000" stroke-width="2"/></svg></div>`);
const DAYS = [...Array(20)].map((_, i) => 'marzo ' + (i + 12)).concat(['abril 1', 'abril 2', 'abril 3']);
define('layer-row', el => `<style>:host{display:flex;align-items:center;height:27px;font:bold 12px "Liberation Sans",sans-serif;color:#333}
i{box-sizing:border-box;width:12px;height:12px;border:1px solid #a2a2a2;background:linear-gradient(#eee,#dadada);border-radius:50%;margin:-3px 4.500px 0 0;display:grid;place-items:center}
:host([box]) i{border-radius:2px}b{width:6px;height:6px;border-radius:50%;background:#4c4c4c}svg{overflow:visible}</style><i>${el.hasAttribute('on') ? '<b></b>' : ''}${el.hasAttribute('box') ? '<svg width="8" height="8"><path d="M.5 4.500 3 7 8-.500" fill="none" stroke="#333" stroke-width="2.200"/></svg>' : ''}</i><fit-text w="${el.getAttribute('w')}">${el.textContent}</fit-text>`);
define('layer-control', `<style>:host{display:block;box-sizing:border-box;width:88px;height:670px;border:2px solid rgba(0,0,0,.3);background:#fff;background-clip:padding-box;border-radius:5px;padding:5.500px 0 0 4.700px}
hr{border:0;border-top:1px solid #ddd;margin:1.500px 0 3px -4.700px}</style>
${DAYS.map((d, i) => `<layer-row w="${i < 20 ? 52 : 35.500}" ${i === 22 ? 'on' : ''}>${d}</layer-row>`).join('')}<hr><layer-row box w="44.500">leyenda</layer-row>`);
define('case-legend', `<style>:host{display:block;box-sizing:border-box;width:80px;height:125px;border-radius:5px;background:rgba(255,255,255,.8);box-shadow:0 0 15px rgba(0,0,0,.2);padding:6px 8px;font:14px/18px "Liberation Sans",sans-serif;color:#555}
b{display:block;height:20.500px}div{display:flex;align-items:flex-start}i{background:#f87b7e;border-radius:50%;margin-right:8px;flex:none}fit-text{display:block}</style>
<b><fit-text w="64.500">COVID-19</fit-text></b>
${[['1-5', 8, 8, 20.5], ['5-20', 14, 15, 20], ['20-50', 19, 20, 24], ['&gt;50', 26, 26, 30]].map(([t, w, h, row], k) => `<div style="height:${row}px"><i style="width:${w}px;height:${h}px;margin-top:${[0.5, -2, -2, -2][k]}px"></i><fit-text style="margin-top:${[0.5, 0, 2, 6][k]}px">${t}</fit-text></div>`).join('')}`);
define('map-credit', `<style>:host{display:block;height:16px;box-sizing:border-box;background:rgba(255,255,255,.7);padding:0 6px 0 5.500px;font:11px/16px "Liberation Sans",sans-serif;color:#333}a{color:#0078a8}</style><fit-text w="248.500"><a>Leaflet</a> | © <a>OpenStreetMap</a> contributors, <a>CC-BY-SA</a></fit-text>`);
define('covid-map', `<style>:host{display:grid;width:864px;height:768px;overflow:hidden}
:host>*,map-canvas,.c{grid-area:1/1}.c{z-index:1}
zoom-control{margin:10px 0 0 10px;place-self:start}layer-control{margin:10px 10px 0 0;place-self:start end}case-legend{margin:0 0 10px 10px;place-self:end start}map-credit{place-self:end}</style>
<map-canvas></map-canvas><zoom-control class="c"></zoom-control><layer-control class="c"></layer-control><case-legend class="c"></case-legend><map-credit class="c"></map-credit>`);
define('scroll-bar', `<style>:host{display:flex;flex-direction:column;align-items:center;width:21px;background:#f1f1f1}
.t{background:#c1c1c1;width:17px;height:722px;margin-top:auto}svg{display:block;flex:none}</style>
<svg width="21" height="21"><path d="M5.500 14h10l-5-5.500z" fill="#505050"/></svg><div class="t"></div><svg width="21" height="19"><path d="M5.500 7h10l-5 5.500z" fill="#a3a3a3"/></svg>`);
define('page-body', `<style>:host{display:flex;height:901px;background:#fff;font-family:"Liberation Sans",sans-serif;color:#333}
main{flex:1;padding:12px 0 0 495px;overflow:hidden}
p{margin:0;font-size:14px;line-height:20px;height:20px}a{color:#337ab7}h2{font-weight:400;font-size:30px;line-height:33px;height:33px;margin:20px 0 10px}</style>
<main><p><fit-text w="877">Datos fuente sobre los casos fueron descargados desde los sitios web <a>https://www.unionguanajuato.mx/articulo/2020/03/29/cultura/casos-de-</a></fit-text></p><p><fit-text w="531.500"><a>coronavirus-en-mexico-por-estado-estadisticas-covid-19</a> y <a>https://coronavirus.gob.mx/</a></fit-text></p>
<h2><fit-text w="553">Mapa con dinamica de COVID por fechas</fit-text></h2><covid-map></covid-map></main><scroll-bar></scroll-bar>`);

/* ---- taskbar ---- */
const APPS = [['cortana', 22], ['taskview', 22], ['explorer', 28, 1], ['chrome', 28, 3], ['rstudio', 30, 2], ['ship', 30], ['word', 29, 2], ['ppt', 28], ['acrobat', 27, 1], ['excel', 29, 1]];
define('task-button', `<style>:host{display:grid;grid-template-rows:47px 3px;justify-items:center;align-items:center;width:61.800px;height:50px;flex:none}
:host([front]){background:#64635a}u{display:block;width:50px;height:3px;background:transparent}
:host([open]) u{background:#76c497}:host([multi]) u{background:linear-gradient(90deg,#76c497 39px,#5b8f73 39px)}:host([front]) u{background:#8be0ae;width:61.800px}</style><slot></slot><u></u>`);
define('task-bar', `<style>:host{display:flex;height:50px;color:#fff;font-family:${UI};background:linear-gradient(90deg,#2f2b20,#2b281f 480px,#35352b 700px,#35372d 950px,#2b3030 1100px,#23282b 1250px,#2b281f 1370px,#262a34 1500px,#272b3a 1700px,#2a2736)}
.start{width:60px;display:grid;place-items:center}.search{width:429px;box-sizing:border-box;background:#f0f0f0;border:1px solid #c2c2c2;display:flex;align-items:center;padding-left:14px;color:#2b2b2b;font-size:18px;gap:15.500px}
.apps{display:flex}.tray{display:flex;align-items:center;margin-left:auto}.clock{display:flex;flex-direction:column;align-items:center;font-size:14.500px;line-height:23px;width:78px;margin-left:18px}
.n{display:grid;width:32px;height:50px;margin-left:22px}.n>*{grid-area:1/1}.b{place-self:end;box-sizing:border-box;width:21px;height:21px;border-radius:50%;border:1.200px solid #aaa;background:#2b2b33;font:700 13px/18px ${UI};text-align:center;margin:0 2px 5px 0}.edge{width:1px;height:50px;background:#65636c;margin:0 4px 0 13.500px}</style>
<div class="start">${icon('winstart', 20)}</div><div class="search">${icon('lens', 20)}<fit-text w="205">Escribe aquí para buscar</fit-text></div>
<div class="apps">${APPS.map(([n, s, o]) => `<task-button ${o ? 'open' : ''} ${o === 2 ? 'multi' : ''} ${o === 3 ? 'front' : ''}>${icon(n, s)}</task-button>`).join('')}</div>
<div class="tray">${icon('caret', 19)}${icon('cloud', 20, 'margin-left:11px')}${icon('battery', 20, 'margin-left:10px')}${icon('wifi', 20, 'margin-left:10px')}${icon('mute', 20, 'margin-left:9px')}${icon('upload', 20, 'margin-left:11px')}${icon('dropwhite', 20, 'margin-left:9px')}<fit-text w="24" style="font-size:14.500px;margin-left:15px">ESP</fit-text>
<div class="clock"><fit-text w="71">10:25 p. m.</fit-text><fit-text w="76">03/04/2020</fit-text></div><div class="n">${icon('notes', 20, 'place-self:center start')}<div class="b">2</div></div><div class="edge"></div></div>`);
define('desktop-screen', `<style>:host{display:flex;flex-direction:column;width:1920px;height:1080px;overflow:hidden}</style><browser-head></browser-head><page-body></page-body><task-bar></task-bar>`);
</script>
</body>
</html>
